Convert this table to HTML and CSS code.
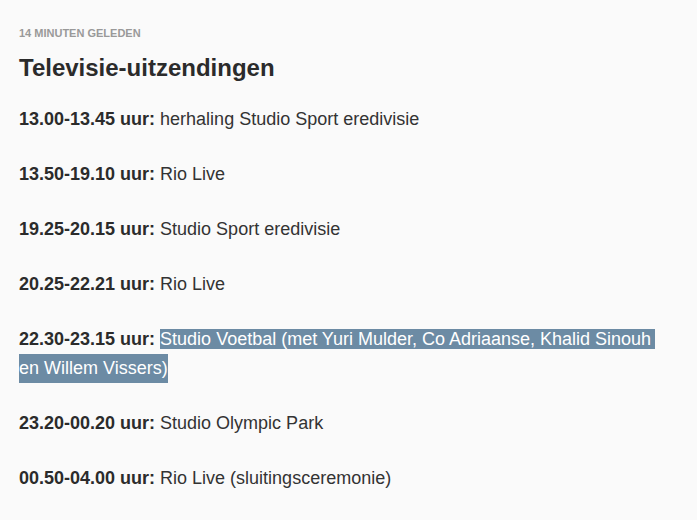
FILE: index.html
```html
<!DOCTYPE html>
<html lang="nl">
<head>
<meta charset="utf-8">
<link rel="stylesheet" href="styles.css">
</head>
<body>
<article class="post">
  <div class="meta">14 MINUTEN GELEDEN</div>
  <h2 class="title">Televisie-uitzendingen</h2>
  <p class="item"><strong>13.00-13.45 uur:</strong> herhaling Studio Sport eredivisie</p>
  <p class="item"><strong>13.50-19.10 uur:</strong> Rio Live</p>
  <p class="item"><strong>19.25-20.15 uur:</strong> Studio Sport eredivisie</p>
  <p class="item"><strong>20.25-22.21 uur:</strong> Rio Live</p>
  <p class="item"><strong>22.30-23.15 uur:</strong> <span class="sel">Studio Voetbal (met Yuri Mulder, Co Adriaanse, Khalid Sinouh </span><br><span class="sel sel-last">en Willem Vissers)</span></p>
  <p class="item"><strong>23.20-00.20 uur:</strong> Studio Olympic Park</p>
  <p class="item"><strong>00.50-04.00 uur:</strong> Rio Live (sluitingsceremonie)</p>
</article>
</body>
</html>
```
FILE: styles.css
```css
html, body {
  margin: 0;
  padding: 0;
  background: #fafafa;
}
body {
  font-family: "Liberation Sans", Arial, sans-serif;
  color: #333;
}
.post {
  padding: 27px 19px 0 19px;
  width: 659px;
}
.meta {
  font-size: 11px;
  font-weight: bold;
  color: #999;
  line-height: 13px;
}
.title {
  font-size: 24px;
  font-weight: bold;
  color: #2b2b2b;
  margin: 13px 0 0 0;
  line-height: 30px;
}
.item {
  font-size: 18px;
  line-height: 29px;
  margin: 0 0 26px 0;
}
.item:first-of-type {
  margin-top: 22px;
}
.item strong {
  color: #2b2b2b;
}
.sel {
  background: #6c8ba4;
  color: #fff;
  padding-right: 4px;
}
.sel-last {
  display: inline-block;
  padding-right: 0;
}
```
